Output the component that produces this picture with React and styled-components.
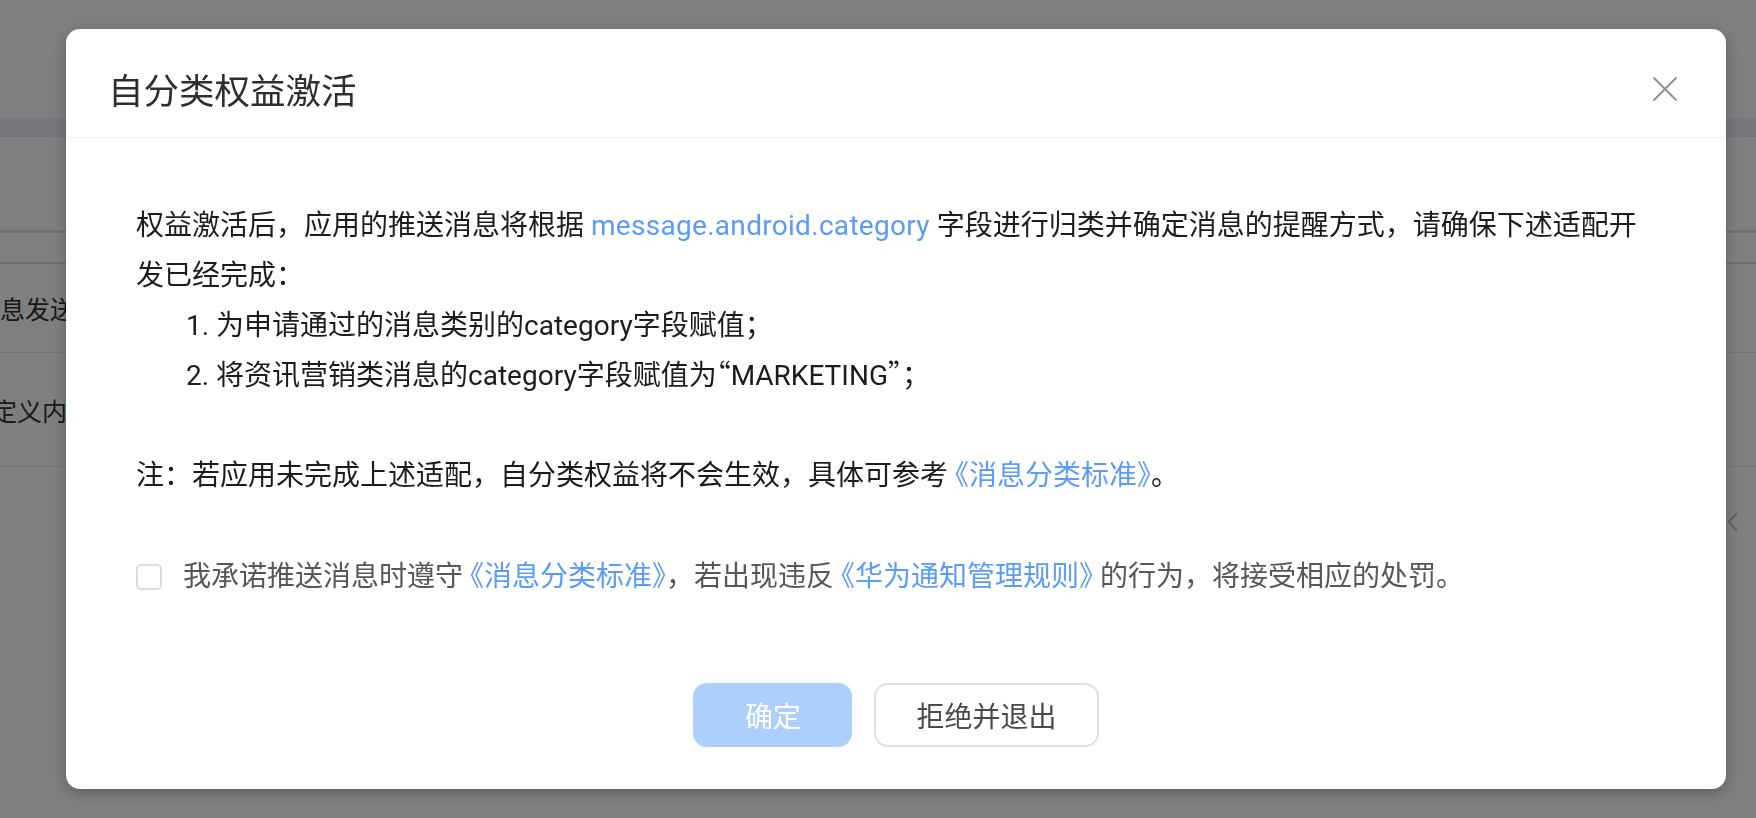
import React from "react";
import styled, { createGlobalStyle } from "styled-components";

const GlobalStyle = createGlobalStyle`
  html, body {
    margin: 0;
    padding: 0;
  }
  body {
    font-family: Roboto, "Noto Sans CJK SC", sans-serif;
    background: #ffffff;
    overflow: hidden;
  }
  * { box-sizing: border-box; }
`;

/* ---------- underlying page ---------- */
const Page = styled.div`
  width: 1756px;
  height: 818px;
  background: #ffffff;
  display: flex;
  flex-direction: column;
  padding-top: 118px;
  overflow: hidden;
`;

const Band = styled.div`
  height: 19px;
  background: #edeff4;
`;

const Toolbar = styled.div`
  height: 93px;
`;

const ThickRule = styled.div`
  height: 3px;
  background: #e4e5ea;
`;

const TableHead = styled.div`
  height: 31px;
  border-bottom: 2px solid #dcdde1;
`;

const Row = styled.div`
  height: ${(p) => p.$h}px;
  border-bottom: 1px solid #e6e7eb;
  display: flex;
  align-items: center;
  font-size: 25px;
  color: #333333;
  white-space: nowrap;
  overflow: hidden;
  text-indent: ${(p) => p.$indent || 0}px;
`;

const Pager = styled.div`
  display: flex;
  justify-content: flex-end;
  padding: 44px 17px 0 0;
`;

/* ---------- modal ---------- */
const Overlay = styled.div`
  position: fixed;
  inset: 0;
  background: rgba(0, 0, 0, 0.5);
  display: flex;
  align-items: center;
  padding: 0 30px 0 66px;
`;

const Modal = styled.div`
  width: 1660px;
  background: #ffffff;
  border-radius: 14px;
  box-shadow: 0 4px 14px rgba(0, 0, 0, 0.28);
  display: flex;
  flex-direction: column;
`;

const Header = styled.div`
  height: 109px;
  border-bottom: 1px solid #efeff4;
  display: flex;
  align-items: flex-start;
  justify-content: space-between;
  padding: 38px 49px 0 42px;
`;

const Title = styled.h2`
  margin: 0;
  font-size: 35.5px;
  line-height: 50px;
  font-weight: 400;
  color: #2e2e2e;
`;

const CloseButton = styled.button`
  width: 24px;
  height: 44px;
  padding: 0;
  border: none;
  background: transparent;
  display: flex;
  align-items: center;
  justify-content: center;
  cursor: pointer;
`;

const Body = styled.div`
  padding: 63px 76px 0 70px;
  font-size: 28px;
  line-height: 50px;
  color: #1c1c1c;
`;

const Paragraph = styled.p`
  margin: ${(p) => (p.$spaced ? "50px 0 0" : "0")};
`;

const Steps = styled.ol`
  margin: 0;
  padding: 0 0 0 50px;
  list-style: none;
`;

const Step = styled.li`
  height: 50px;
  white-space: nowrap;
`;

const Quote = styled.span`
  font-family: "Noto Sans CJK SC", sans-serif;
  font-feature-settings: "halt";
  line-height: 1;
`;

const Link = styled.a`
  color: #5a9cf7;
  text-decoration: none;
  font-feature-settings: "halt";
  letter-spacing: ${(p) => (p.$code ? "0.3px" : "0")};
`;

const Agreement = styled.label`
  margin-top: 51px;
  height: 50px;
  display: flex;
  align-items: center;
  gap: 21px;
  color: #575757;
`;

const Box = styled.span`
  width: 26px;
  height: 26px;
  flex: none;
  border: 2px solid #dcdde2;
  border-radius: 5px;
  background: #ffffff;
`;

const Footer = styled.div`
  margin-top: 81px;
  padding-bottom: 42px;
  display: flex;
  justify-content: center;
  gap: 22px;
`;

const Button = styled.button`
  height: 64px;
  border-radius: 14px;
  font-family: inherit;
  font-size: 28px;
  padding: 0 40px;
  cursor: pointer;
  ${(p) =>
    p.$primary
      ? `
    min-width: 159px;
    background: #acd0fb;
    border: none;
    color: #ffffff;
  `
      : `
    min-width: 222px;
    background: #ffffff;
    border: 2px solid #dfdfe4;
    color: #4a4a4a;
  `}
`;

export default function App() {
  return (
    <>
      <GlobalStyle />
      <Page>
        <Band />
        <Toolbar />
        <ThickRule />
        <TableHead />
        <Row $h={89}>息发送时间</Row>
        <Row $h={114} $indent={-33}>自定义内容</Row>
        <Pager>
          <svg width="12" height="22" viewBox="0 0 12 22">
            <path d="M10 2 L2 11 L10 20" fill="none" stroke="#c6c6c6" strokeWidth="2" />
          </svg>
        </Pager>
      </Page>

      <Overlay>
        <Modal>
          <Header>
            <Title>自分类权益激活</Title>
            <CloseButton aria-label="关闭">
              <svg width="24" height="24" viewBox="0 0 24 24">
                <path
                  d="M1 1 L23 23 M23 1 L1 23"
                  fill="none"
                  stroke="#8e8e93"
                  strokeWidth="1.8"
                  strokeLinecap="round"
                />
              </svg>
            </CloseButton>
          </Header>

          <Body>
            <Paragraph>
              权益激活后，应用的推送消息将根据 <Link $code>message.android.category</Link>{" "}
              字段进行归类并确定消息的提醒方式，请确保下述适配开发已经完成：
            </Paragraph>
            <Steps>
              <Step>1. 为申请通过的消息类别的category字段赋值；</Step>
              <Step>
                2. 将资讯营销类消息的category字段赋值为<Quote>“</Quote>MARKETING
                <Quote>”</Quote>；
              </Step>
            </Steps>
            <Paragraph $spaced>
              注：若应用未完成上述适配，自分类权益将不会生效，具体可参考{" "}
              <Link>《消息分类标准》</Link>。
            </Paragraph>

            <Agreement>
              <Box />
              <span>
                我承诺推送消息时遵守 <Link>《消息分类标准》</Link>，若出现违反{" "}
                <Link>《华为通知管理规则》</Link> 的行为，将接受相应的处罚。
              </span>
            </Agreement>
          </Body>

          <Footer>
            <Button $primary>确定</Button>
            <Button>拒绝并退出</Button>
          </Footer>
        </Modal>
      </Overlay>
    </>
  );
}
